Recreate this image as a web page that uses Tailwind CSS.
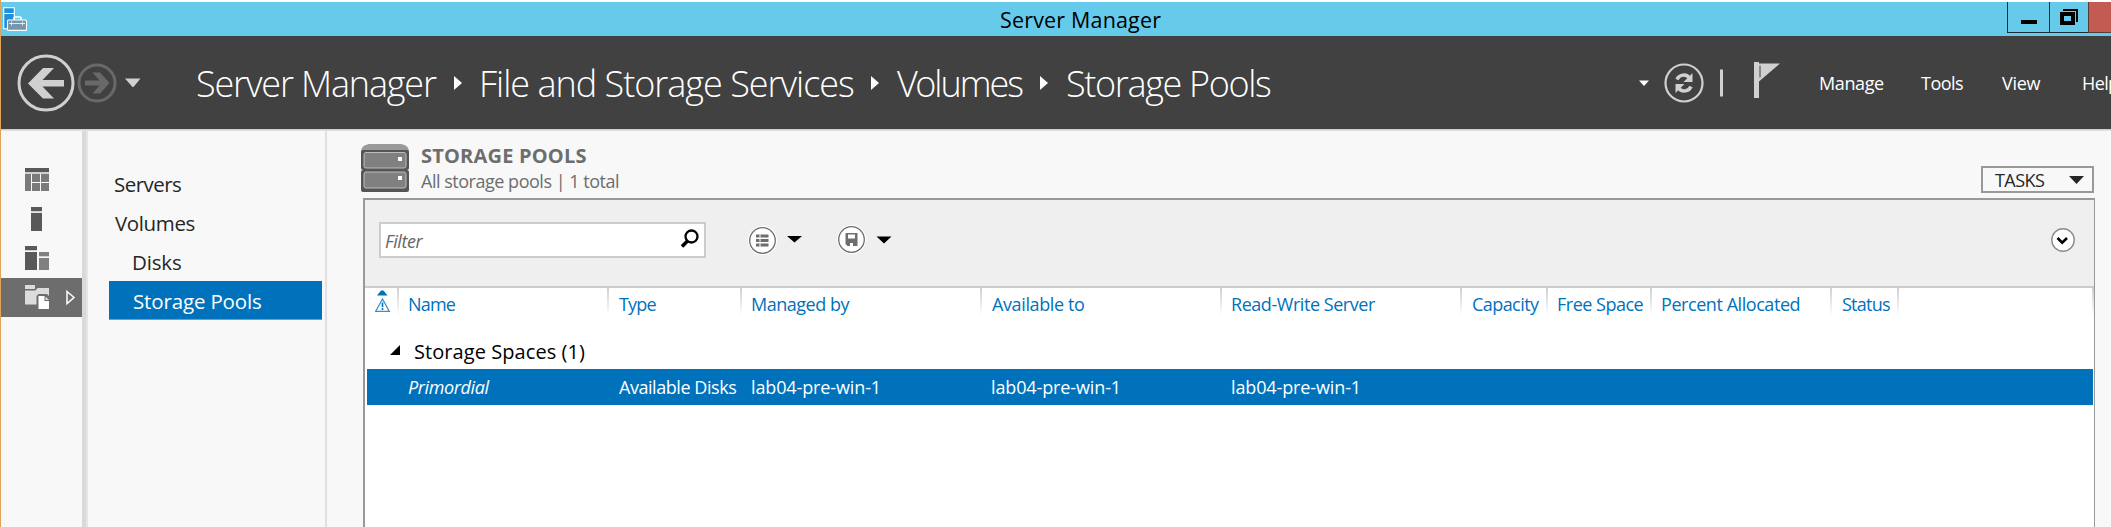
<!DOCTYPE html>
<html lang="en">
<head>
<meta charset="utf-8">
<title>Server Manager</title>
<script src="https://cdn.jsdelivr.net/npm/@tailwindcss/browser@4"></script>
</head>
<body class="w-[2111px] h-[527px] overflow-hidden bg-[#f8f8f8] font-['Open_Sans','Noto_Sans',sans-serif] whitespace-nowrap">
<div class="w-full h-full flex flex-col border-l border-[#e0a458]">
  <!-- Title bar -->
  <div class="h-[2px] shrink-0 bg-white"></div>
  <header class="h-[34px] shrink-0 bg-[#66caeb] flex items-start">
    <svg class="ml-[2px] mt-[4px] shrink-0" width="25" height="26" viewBox="0 0 25 26" fill="none"><rect x=".7" y="1.7" width="10.6" height="21" fill="#1e90dc" stroke="#fff" stroke-width="1.1"/><path d="M1 7.5h10" stroke="#fff"/><path d="M11 14v-2q0-1 1-1h5q1 0 1 1v2" stroke="#fff" stroke-width="1.6"/><rect x="4.5" y="14" width="19" height="10.4" rx="1" fill="#7596ad" stroke="#fff" stroke-width="1.1"/><path d="M6 17.5h16M8.500 15.500v4M19.500 15.500v4" stroke="#e8f2f8" stroke-width=".9"/></svg>
    <h1 class="ml-[972px] text-[21.5px] leading-[36px] tracking-[0.17px] text-black">Server Manager</h1>
    <div class="ml-auto flex h-[31px]">
      <div class="w-[42px] border-l border-b border-[#1f2d33] flex justify-center"><span class="mt-[18px] ml-[1px] w-[16px] h-[4px] bg-black"></span></div>
      <div class="w-[39px] border-l border-b border-[#1f2d33] pl-[10px] pt-[7px]"><svg width="19" height="17" fill="none"><path d="M3 1h14v12" stroke="#000" stroke-width="2"/><rect x="2" y="5" width="11" height="9" stroke="#000" stroke-width="4"/></svg></div>
      <div class="w-[23px] border-l border-b border-[#5b3b38] bg-[#c35b52]"></div>
    </div>
  </header>
  <!-- Navigation bar -->
  <div class="h-[93px] shrink-0 bg-[#414141] flex items-center text-white">
    <svg class="ml-[16px] shrink-0" width="126" height="58" fill="none"><circle cx="29" cy="29" r="27" stroke="#d0d0d0" stroke-width="3"/><path d="M11 29.500L26 14h11L25.500 26H47v6.500H25.500L37 44.500H26z" fill="#d0d0d0"/><circle cx="80" cy="29" r="18" stroke="#696969" stroke-width="3"/><path d="M92.500 29L83 39.500h-7.500l7-8H68v-5h14.500l-7-8H83z" fill="#696969"/><path d="M108 24.500h15.500L116.500 33h-1z" fill="#d0d0d0"/></svg>
    <nav class="flex items-center text-[36px] font-light leading-[93px] h-[93px]">
      <span class="w-[311px] pl-[53px] pt-[2px] tracking-[-1.16px]">Server Manager</span>
      <svg class="shrink-0" width="8" height="14"><path d="M0 0l8 7-8 7z" fill="#fff"/></svg>
      <span class="w-[409px] pl-[17px] pt-[2px] tracking-[-1.01px]">File and Storage Services</span>
      <svg class="shrink-0" width="8" height="14"><path d="M0 0l8 7-8 7z" fill="#fff"/></svg>
      <span class="w-[161px] pl-[18px] pt-[2px] tracking-[-2.1px]"><span class="tracking-[-2.6px]">V</span><span class="tracking-[-2px]">olumes</span></span>
      <svg class="shrink-0" width="8" height="14"><path d="M0 0l8 7-8 7z" fill="#fff"/></svg>
      <span class="pl-[18px] pt-[2px] tracking-[-1.34px]">Storage Pools</span>
    </nav>
    <svg class="shrink-0 ml-auto mr-[18px]" width="144" height="58" fill="none"><path d="M1 26.500h10L6 32z" fill="#fff"/><circle cx="46" cy="29" r="18.500" stroke="#d0d0d0" stroke-width="2.200"/><path d="M39 25.500c2-5 9-6 12-2M53 32.500c-2 5-9 6-12 2" stroke="#d0d0d0" stroke-width="3.500"/><path d="M54.500 19v9h-9zM37.500 39v-9h9z" fill="#d0d0d0"/><path d="M82 15.500h3v27h-3z" fill="#d0d0d0"/><path d="M116 8h5v1.500H142L121 27.500V44h-5z" fill="#d0d0d0"/><path d="M122 11.500v12" stroke="#414141" stroke-width="1"/></svg>
    <nav class="flex shrink-0 w-[311px] pt-[2px] text-[18px] leading-[93px]">
      <span class="w-[102px] shrink-0 pl-[19px] tracking-[-0.4px]">Manage</span>
      <span class="w-[81px] shrink-0 pl-[19px] tracking-[-0.53px]">Tools</span>
      <span class="w-[81px] shrink-0 pl-[19px] tracking-[-0.29px]">View</span>
      <span class="w-[47px] shrink-0 pl-[18px] tracking-[-0.6px] overflow-hidden">Help</span>
    </nav>
  </div>
  <div class="h-[2px] shrink-0 bg-[#e0e0e0] border-t border-[#cfcfcf]"></div>
  <main class="flex flex-1 min-h-0">
    <!-- Icon rail -->
    <aside class="w-[81px] shrink-0 pt-[30px]">
      <div class="h-[39px] pl-[24px] pt-[7px]"><svg width="24" height="24"><path d="M0 0h24v4H0z" fill="#595959"/><path d="M0 4h24v2H0z" fill="#d0d0d0"/><path d="M0 6h6v17H0zM7 6h8v8H7zM16 6h8v8h-8zM7 15h8v8H7zM16 15h8v8h-8z" fill="#7a7a7a"/></svg></div>
      <div class="h-[39px] pl-[30px] pt-[7px]"><svg width="11" height="24"><path d="M0 0h11v4H0zM0 6h11v18H0z" fill="#595959"/><path d="M0 4h11v1.500H0z" fill="#d0d0d0"/></svg></div>
      <div class="h-[39px] pl-[24px] pt-[7px]"><svg width="24" height="24"><path d="M0 0h12v4H0zM0 6h12v18H0z" fill="#595959"/><path d="M0 4h12v1H0zM14 10h10v1H14z" fill="#d0d0d0"/><path d="M14 6h10v4H14zM14 12h10v12H14z" fill="#808080"/></svg></div>
      <div class="h-[39px] pl-[24px] pt-[7px] bg-[#6d6d6d] flex"><svg width="24" height="24" fill="none"><path d="M0 0h10v4H0z" fill="#dcdcdc"/><path d="M0 5.500h10.500L12.500 3H24v8l-2-2h-8.500l-2 2v8.500H0z" fill="#dcdcdc"/><path d="M13.500 11h6v5H24v8H13.500z" fill="#fff"/><path d="M20.500 11.500L24 15h-3.500z" fill="#dcdcdc"/></svg><svg class="ml-[16px] mt-[4px]" width="12" height="17" fill="none"><path d="M2 2.500l7 6-7 6z" stroke="#fff" stroke-width="1.500"/></svg></div>
    </aside>
    <div class="w-[6px] shrink-0 bg-[#e5e5e5] border-l-4 border-[#d9d9d9]"></div>
    <!-- Section links -->
    <aside class="w-[239px] shrink-0 pt-[33px] pl-[21px] pr-[3px] border-r-2 border-[#e0e0e0] text-[20.5px] leading-[41px] text-[#262626]">
      <div class="h-[39px] pl-[5px] tracking-[-0.54px]">Servers</div>
      <div class="h-[39px] pl-[6px] tracking-[-0.38px]">Volumes</div>
      <div class="h-[39px] pl-[23px] tracking-[-0.15px]">Disks</div>
      <div class="h-[39px] pl-[24px] tracking-[-0.15px] bg-[#0072bc] border-b border-[#5aa3d4] text-white">Storage Pools</div>
    </aside>
    <!-- Storage pools tile -->
    <section class="flex-1 min-w-0 flex flex-col pl-[36px]">
      <div class="h-[67px] shrink-0 flex">
        <svg class="mt-[12px] ml-[-2px]" width="48" height="50" fill="none"><path d="M0 9q0-7 8-8h32q8 1 8 8z" fill="#9a9a9a"/><rect y="7" width="48" height="20" rx="2" fill="#555"/><rect y="27" width="48" height="22" rx="2" fill="#555"/><rect x="3" y="9.500" width="42" height="15.500" rx="2" fill="#808080" stroke="#bdbdbd"/><rect x="3" y="29" width="42" height="16" rx="2" fill="#808080" stroke="#bdbdbd"/><path d="M37 14h4v4h-4zM37 33h4v4h-4z" fill="#fff"/></svg>
        <div class="ml-[12px] pt-[11px] text-[#6d6d6d]">
          <div class="text-[20px] leading-[27px] font-bold tracking-[0.2px]">STORAGE POOLS</div>
          <div class="text-[18px] leading-[25px] tracking-[-0.48px]">All storage pools | 1 total</div>
        </div>
        <div class="ml-auto mr-[17px] mt-[35px] w-[113px] h-[27px] border-2 border-[#999] text-[#262626] text-[18px] leading-[25px] pl-[12px] flex"><span class="tracking-[-0.55px]">TASKS</span><svg class="ml-auto mr-[8px] mt-[8px]" width="15" height="8"><path d="M0 0h15L7.500 8z" fill="#262626"/></svg></div>
      </div>
      <div class="flex-1 min-h-0 mr-[16px] border-t-2 border-l-2 border-r border-[#999] bg-white">
        <div class="h-[88px] bg-[#efefef] border-b-2 border-[#ccc] flex">
          <div class="mt-[22px] ml-[14px] w-[327px] h-[36px] border-2 border-[#ccc] bg-white flex text-[18px] leading-[34px] italic text-[#666] pl-[4px]"><span class="tracking-[-0.42px]">Filter</span><svg class="ml-auto mr-[5px] mt-[5px]" width="19" height="19" fill="none"><circle cx="11.500" cy="7.500" r="6" stroke="#000" stroke-width="2.300"/><path d="M7.500 12L2 17.500" stroke="#000" stroke-width="3.600"/></svg></div>
          <svg class="mt-[24px] ml-[42px]" width="146" height="32" fill="none"><circle cx="14.500" cy="16.500" r="14.500" fill="#fff"/><circle cx="14.500" cy="16.500" r="12.800" stroke="#6d6e71" stroke-width="1.300"/><path d="M8 10.500h3.500v3H8zM8 15h3.500v3H8zM8 19.500h3.500v3H8zM12.500 10.500h8v3h-8zM12.500 15h8v3h-8zM12.500 19.500h8v3h-8z" fill="#6d6e71"/><path d="M39 12h15l-7.500 6.500z" fill="#000"/><circle cx="103.500" cy="15.500" r="14.500" fill="#fff"/><circle cx="103.500" cy="15.500" r="12.800" stroke="#6d6e71" stroke-width="1.300"/><path d="M97.500 9h12v13h-10l-2-2z" fill="#6d6e71"/><path d="M100 10.500h7v4h-7zM102 19h3v3h-3z" fill="#fff"/><path d="M128.500 12.500h15L136 19.500z" fill="#000"/></svg>
          <svg class="ml-auto mt-[28px] mr-[19px]" width="24" height="24" fill="none"><circle cx="12" cy="12" r="11.200" fill="#fff" stroke="#8c8c8c" stroke-width="1.400"/><path d="M6.500 10l4.700 4.700L16 10" stroke="#000" stroke-width="2.600"/></svg>
        </div>
        <div class="grid grid-cols-[34px_210px_133px_240px_240px_240px_86px_104px_180px_67px_1fr] text-[18px] text-[#0072bc] leading-[33px] h-[47px]">
          <div class="flex pl-[10px] pt-[2px]"><svg width="16" height="24" fill="none"><path d="M2 5.500L6 0.500h2.500L12.500 5.500z" fill="#0072bc"/><path d="M7.500 9L14.300 21.300H.7z" stroke="#3f8ccb" stroke-width="1.300"/><path d="M7.500 12.500v4.500M7.500 18v2" stroke="#0072bc" stroke-width="1.600"/></svg><i class="ml-auto w-[2px] h-[28px] -mt-[2px] bg-linear-to-b from-[#d0d0d0] to-white"></i></div>
          <div class="flex pl-[9px]"><span class="tracking-[-0.8px]">Name</span><i class="ml-auto w-[2px] h-[28px] bg-linear-to-b from-[#d0d0d0] to-white"></i></div>
          <div class="flex pl-[10px]"><span class="tracking-[-0.81px]">Type</span><i class="ml-auto w-[2px] h-[28px] bg-linear-to-b from-[#d0d0d0] to-white"></i></div>
          <div class="flex pl-[9px]"><span class="tracking-[-0.48px]">Managed by</span><i class="ml-auto w-[2px] h-[28px] bg-linear-to-b from-[#d0d0d0] to-white"></i></div>
          <div class="flex pl-[10px]"><span class="tracking-[-0.38px]">Available to</span><i class="ml-auto w-[2px] h-[28px] bg-linear-to-b from-[#d0d0d0] to-white"></i></div>
          <div class="flex pl-[9px]"><span class="tracking-[-0.45px]">Read-Write Server</span><i class="ml-auto w-[2px] h-[28px] bg-linear-to-b from-[#d0d0d0] to-white"></i></div>
          <div class="flex pl-[10px]"><span class="tracking-[-0.56px]">Capacity</span><i class="ml-auto w-[2px] h-[28px] bg-linear-to-b from-[#d0d0d0] to-white"></i></div>
          <div class="flex pl-[9px]"><span class="tracking-[-0.5px]">Free Space</span><i class="ml-auto w-[2px] h-[28px] bg-linear-to-b from-[#d0d0d0] to-white"></i></div>
          <div class="flex pl-[9px]"><span class="tracking-[-0.44px]">Percent Allocated</span><i class="ml-auto w-[2px] h-[28px] bg-linear-to-b from-[#d0d0d0] to-white"></i></div>
          <div class="flex pl-[10px]"><span class="tracking-[-0.75px]">Status</span><i class="ml-auto w-[2px] h-[28px] bg-linear-to-b from-[#d0d0d0] to-white"></i></div>
          <div class="flex"><i class="ml-auto w-[2px] h-[28px] bg-linear-to-b from-[#d0d0d0] to-white"></i></div>
        </div>
        <div class="h-[34px] flex text-[20px] leading-[34px] text-black"><svg class="ml-[25px] mt-[10px] mr-[14px]" width="10" height="10"><path d="M10 0v10H0z" fill="#000"/></svg><span class="tracking-[0.07px]">Storage Spaces (1)</span></div>
        <div class="h-[36px] ml-[2px] mr-[1px] bg-[#0072bc] text-white text-[18px] leading-[36px] grid grid-cols-[32px_210px_133px_240px_240px_1fr]">
          <div></div>
          <div class="pl-[9px] italic tracking-[-0.38px]">Primordial</div>
          <div class="pl-[10px] tracking-[-0.45px]">Available Disks</div>
          <div class="pl-[9px] tracking-[-0.12px]">lab04-pre-win-1</div>
          <div class="pl-[9px] tracking-[-0.12px]">lab04-pre-win-1</div>
          <div class="pl-[9px] tracking-[-0.12px]">lab04-pre-win-1</div>
        </div>
      </div>
    </section>
  </main>
</div>
</body>
</html>
